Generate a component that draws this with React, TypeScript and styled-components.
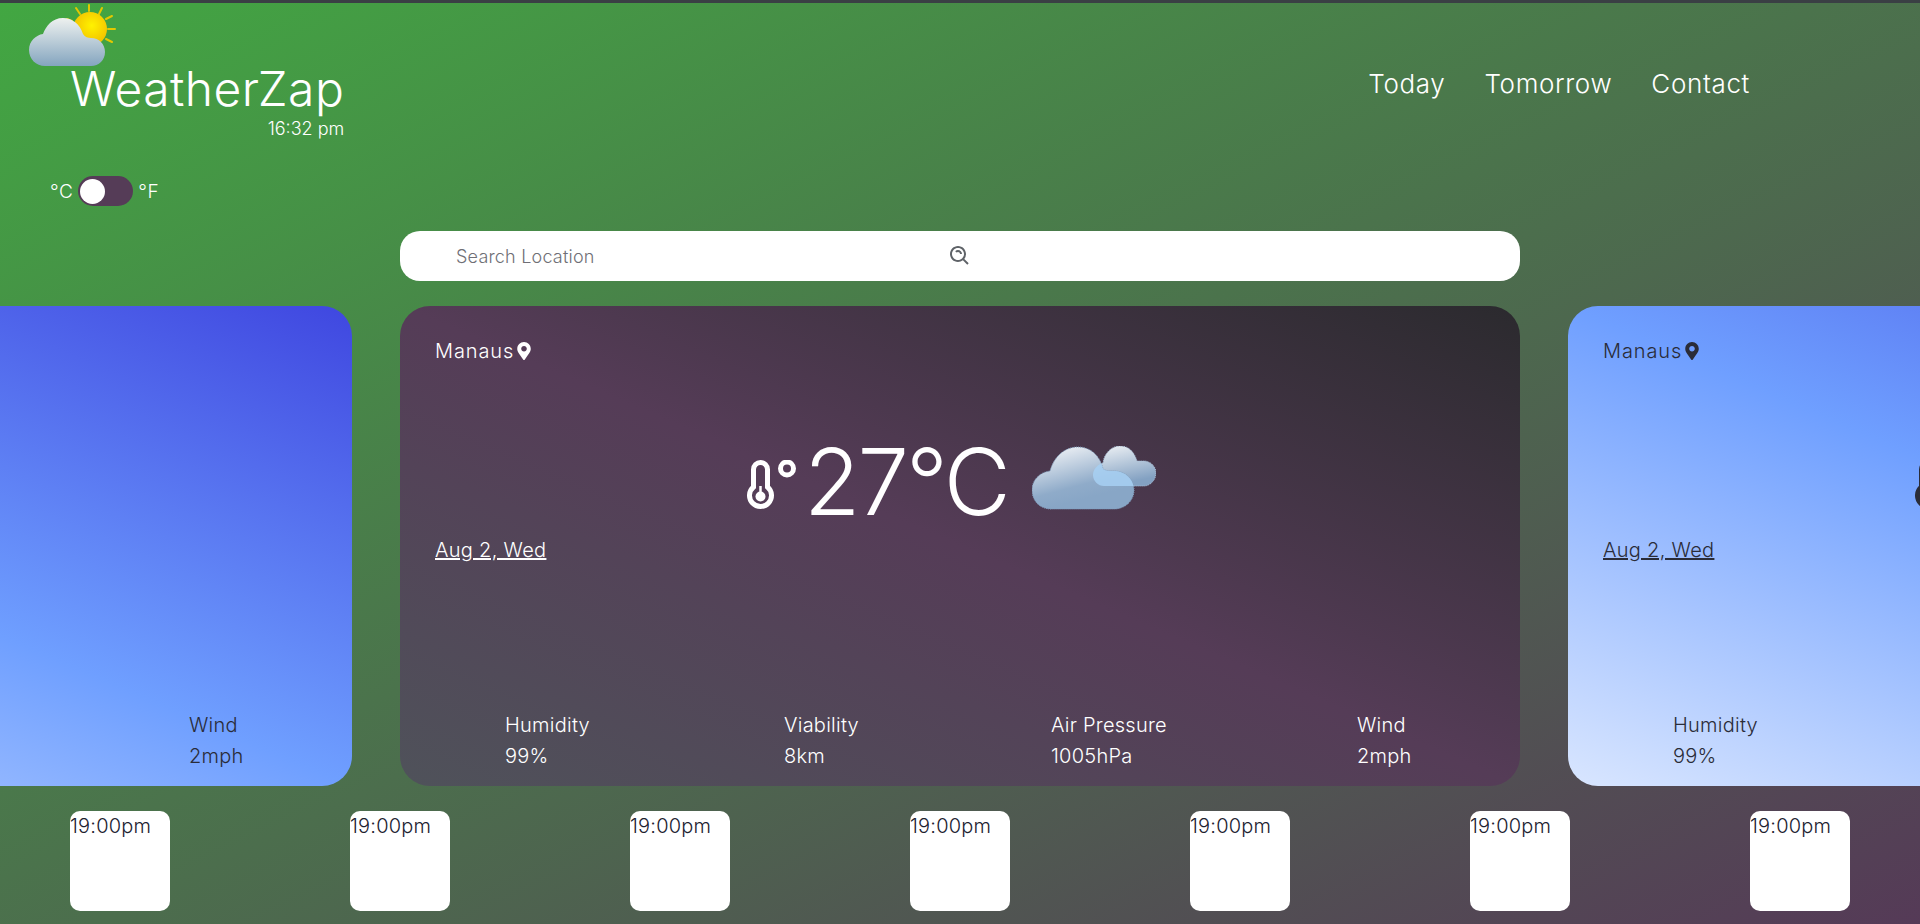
import { useId } from 'react'
import styled, { createGlobalStyle, css } from 'styled-components'
import { FaMapMarkerAlt } from 'react-icons/fa'
import { BiSearchAlt } from 'react-icons/bi'

const GlobalStyle = createGlobalStyle`
  html, body {
    margin: 0;
    height: 924px;
    overflow: hidden;
  }
  * {
    box-sizing: border-box;
  }
`

const Page = styled.div`
  height: 924px;
  overflow: hidden;
  border-top: 3px solid #3a3f44;
  background: linear-gradient(to bottom right, #42a742, #553a57);
  color: #fff;
  font-family: Inter, 'Noto Sans', sans-serif;
  font-weight: 300;
`

const Header = styled.header`
  display: flex;
  justify-content: space-between;
  align-items: flex-start;
  height: 228px;
  padding-right: 170px;
`
const Brand = styled.div`
  display: flex;
  flex-direction: column;
  align-items: flex-start;
  padding-left: 28px;
`
const TitleBlock = styled.div`
  margin: -9px 0 0 42px;
  text-align: right;
`
const Title = styled.h1`
  margin: 0;
  font-size: 48px;
  line-height: 58px;
  font-weight: 300;
  letter-spacing: 0.45px;
`
const Time = styled.div`
  font-size: 18px;
  line-height: 22px;
`
const UnitRow = styled.div`
  display: flex;
  align-items: center;
  gap: 5px;
  margin: 36px 0 0 22px;
  font-size: 19px;
  letter-spacing: 0.5px;
`
const Switch = styled.div`
  display: flex;
  align-items: center;
  width: 55px;
  height: 30px;
  padding-left: 2px;
  border-radius: 15px;
  background: #553c57;
`
const Knob = styled.span`
  width: 25px;
  height: 25px;
  border-radius: 50%;
  background: #fff;
`
const Nav = styled.nav`
  display: flex;
  gap: 39px;
  margin-top: 66px;
  font-size: 26px;
  line-height: 30px;
  letter-spacing: 0.65px;
`
const NavLink = styled.a`
  color: #fff;
  text-decoration: none;
`

const SearchBar = styled.form`
  display: flex;
  align-items: center;
  width: 1120px;
  height: 50px;
  margin: 0 auto;
  border-radius: 20px;
  background: #fff;
  color: #5f6368;
`
const SearchInput = styled.input`
  width: 548px;
  height: 100%;
  padding: 0 0 0 56px;
  border: 0;
  outline: 0;
  background: transparent;
  font-family: inherit;
  font-size: 18px;
  font-weight: 300;
  letter-spacing: 0.2px;
  &::placeholder {
    color: #6f6f76;
    opacity: 1;
  }
`

const Carousel = styled.section`
  display: flex;
  justify-content: center;
  gap: 48px;
  margin-top: 25px;
`
const Card = styled.article<{ $tone: 'dark' | 'light' }>`
  flex: 0 0 1120px;
  display: flex;
  flex-direction: column;
  height: 480px;
  padding: 30px 0 0 35px;
  border-radius: 30px;
  ${({ $tone }) =>
    $tone === 'dark'
      ? css`
          color: #fff;
          background: linear-gradient(to top right, #4f525a 0%, #553c57 50%, #2b2a2e 100%);
        `
      : css`
          color: #2a2c38;
          background: linear-gradient(to top right, #d9e6ff 0%, #6f9fff 50%, #3f47e0 100%);
        `}
`
const Place = styled.div`
  display: flex;
  align-items: center;
  gap: 3px;
  height: 30px;
  font-size: 20px;
  letter-spacing: 0.9px;
  svg {
    width: 14px;
    height: 18px;
  }
`
const TempRow = styled.div`
  display: flex;
  align-items: center;
  height: 90px;
  margin: 74px 0 0 312px;
`
const Degrees = styled.span`
  margin: 0 24px 6px 7px;
  font-size: 92px;
  line-height: 90px;
  font-weight: 300;
  letter-spacing: -3px;
`
const CloudsSvg = styled.svg`
  margin-bottom: 14px;
`
const DateLink = styled.a`
  align-self: flex-start;
  margin-top: 5px;
  font-size: 20px;
  line-height: 30px;
  letter-spacing: 0.3px;
  color: inherit;
  text-decoration: underline;
`
const Stats = styled.div`
  display: grid;
  grid-template-columns: 279px 267px 306px auto;
  margin: 145px 0 0 70px;
`
const Stat = styled.div`
  font-size: 20px;
  line-height: 31px;
  letter-spacing: 0.25px;
`

const Hours = styled.section`
  display: flex;
  justify-content: space-between;
  padding: 25px 70px 0;
`
const HourCard = styled.div`
  width: 100px;
  height: 100px;
  border-radius: 10px;
  background: #fff;
  color: #1c2230;
  font-size: 20px;
  line-height: 30px;
  letter-spacing: 0.2px;
`

const LogoIcon = () => (
  <svg width="90" height="66" viewBox="0 0 90 66">
    <defs>
      <radialGradient id="logo-sun" cx="0.55" cy="0.4" r="0.7">
        <stop offset="0" stopColor="#fff200" />
        <stop offset="1" stopColor="#efb400" />
      </radialGradient>
      <linearGradient id="logo-cloud" x1="0" y1="0" x2="0" y2="1">
        <stop offset="0" stopColor="#eef1ef" />
        <stop offset="1" stopColor="#84a5bf" />
      </linearGradient>
    </defs>
    <g stroke="#e3c800" strokeWidth="2" strokeLinecap="round">
      <path d="M61 2v6M48 5l4 6M74 5l-3 6M84 13l-6 3M87 26h-7M84 39l-6-3M39 16l5 2" />
    </g>
    <circle cx="62" cy="26" r="17" fill="url(#logo-sun)" />
    <path
      d="M17 63C8 63 1 56 1 47C1 38 8 32 15 31C18 23 24 15 35 15C44 15 52 21 55 31C57 34 60 35 63 35C71 35 77 41 77 49C77 57 71 63 63 63Z"
      fill="url(#logo-cloud)"
    />
  </svg>
)

const ThermometerIcon = () => (
  <svg width="50" height="50" viewBox="0 0 50 50" fill="none" stroke="currentColor" strokeWidth="5">
    <path d="M6.5 27V9.5a7 7 0 0 1 14 0V27a11 11 0 1 1-14 0Z" />
    <circle cx="40" cy="8.5" r="6.5" />
    <circle cx="13.5" cy="36.5" r="5" fill="currentColor" stroke="none" />
    <path d="M13.5 26v10" strokeWidth="2.5" />
  </svg>
)

const BIG_CLOUD =
  'M19 63C8 63 0 55 0 44C0 34 8 26 18 25C22 11 32 1 46 1C58 1 68 9 71 23C74 25 78 25 82 25C93 25 102 33 102 44C102 55 93 63 82 63Z'
const SMALL_CLOUD =
  'M72 40C66 40 61 35 61 29C61 23 66 18 71 17C72 8 79 0 88 0C96 0 102 5 105 15C107 15 110 15 112 15C118 15 124 20 124 27C124 34 118 40 112 40Z'

const CloudsIcon = () => {
  const id = useId()
  return (
    <CloudsSvg width="124" height="64" viewBox="0 0 124 64">
      <defs>
        <linearGradient id={`${id}big`} x1="0.25" y1="0" x2="0.6" y2="0.8">
          <stop offset="0" stopColor="#eef1f5" />
          <stop offset="0.75" stopColor="#8fabc9" />
          <stop offset="1" stopColor="#88a6c6" />
        </linearGradient>
        <linearGradient id={`${id}small`} x1="0.3" y1="0" x2="0.6" y2="0.9">
          <stop offset="0" stopColor="#e8edf2" />
          <stop offset="1" stopColor="#83a1c2" />
        </linearGradient>
        <clipPath id={`${id}clip`}>
          <path d={BIG_CLOUD} />
        </clipPath>
      </defs>
      <path d={SMALL_CLOUD} fill={`url(#${id}small)`} stroke="#a7bfd8" strokeDasharray="1 1" />
      <path d={BIG_CLOUD} fill={`url(#${id}big)`} stroke="#7f9dbd" strokeDasharray="1 1" />
      <path d={SMALL_CLOUD} fill="#a7d0f3" fillOpacity="0.85" clipPath={`url(#${id}clip)`} />
    </CloudsSvg>
  )
}

const stats = [
  { label: 'Humidity', value: '99%' },
  { label: 'Viability', value: '8km' },
  { label: 'Air Pressure', value: '1005hPa' },
  { label: 'Wind', value: '2mph' },
]

const hours = [0, 1, 2, 3, 4, 5, 6]

const WeatherCard = ({ tone }: { tone: 'dark' | 'light' }) => (
  <Card $tone={tone}>
    <Place>
      Manaus
      <FaMapMarkerAlt />
    </Place>
    <TempRow>
      <ThermometerIcon />
      <Degrees>27°C</Degrees>
      <CloudsIcon />
    </TempRow>
    <DateLink href="#">Aug 2, Wed</DateLink>
    <Stats>
      {stats.map((s) => (
        <Stat key={s.label}>
          <div>{s.label}</div>
          <div>{s.value}</div>
        </Stat>
      ))}
    </Stats>
  </Card>
)

export default function App() {
  return (
    <Page>
      <GlobalStyle />
      <Header>
        <Brand>
          <LogoIcon />
          <TitleBlock>
            <Title>WeatherZap</Title>
            <Time>16:32 pm</Time>
          </TitleBlock>
          <UnitRow>
            <span>°C</span>
            <Switch>
              <Knob />
            </Switch>
            <span>°F</span>
          </UnitRow>
        </Brand>
        <Nav>
          <NavLink href="#">Today</NavLink>
          <NavLink href="#">Tomorrow</NavLink>
          <NavLink href="#">Contact</NavLink>
        </Nav>
      </Header>
      <SearchBar>
        <SearchInput placeholder="Search Location" />
        <BiSearchAlt size={24} />
      </SearchBar>
      <Carousel>
        <WeatherCard tone="light" />
        <WeatherCard tone="dark" />
        <WeatherCard tone="light" />
      </Carousel>
      <Hours>
        {hours.map((h) => (
          <HourCard key={h}>19:00pm</HourCard>
        ))}
      </Hours>
    </Page>
  )
}
